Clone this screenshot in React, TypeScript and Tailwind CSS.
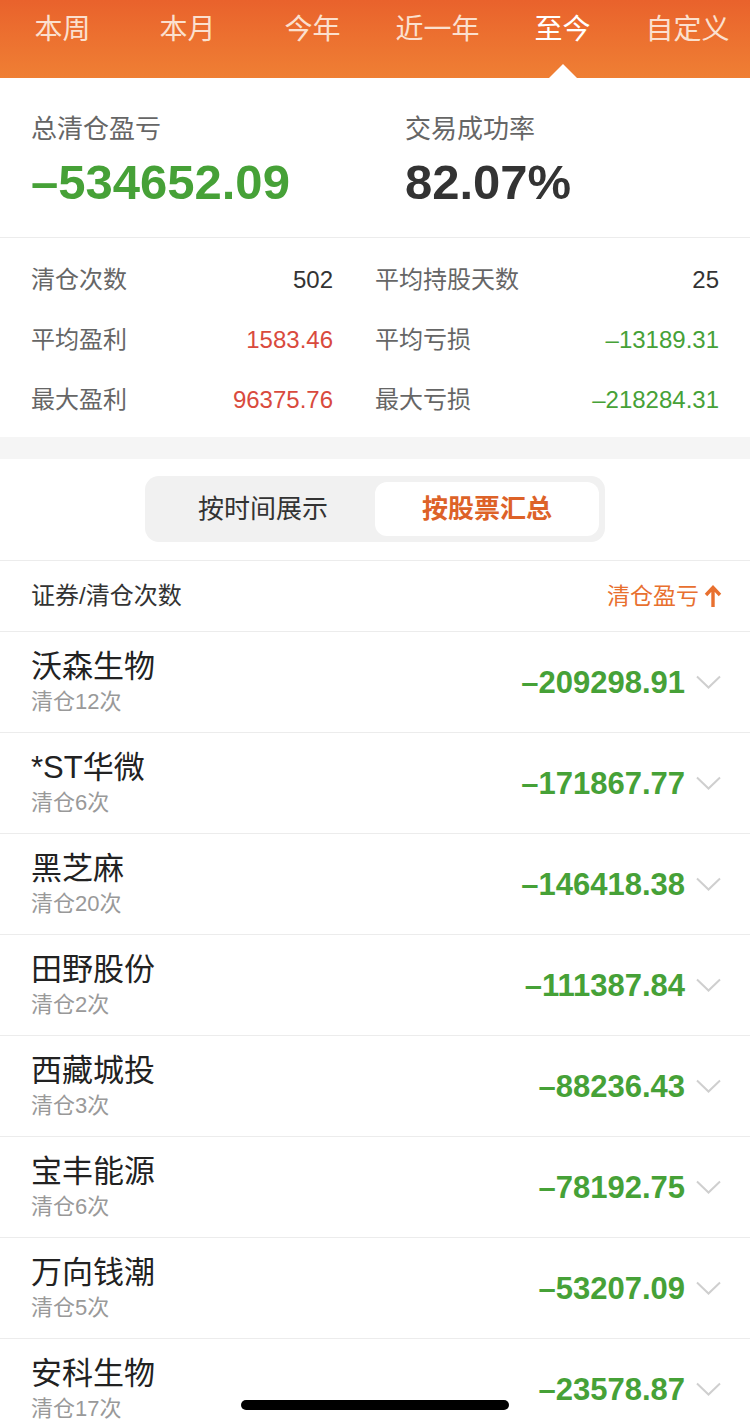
const tabs = ["本周", "本月", "今年", "近一年", "至今", "自定义"];

const stats = [
  { l: "清仓次数", v: "502", c: "text-[#333]", l2: "平均持股天数", v2: "25", c2: "text-[#333]" },
  { l: "平均盈利", v: "1583.46", c: "text-[#d94a3d]", l2: "平均亏损", v2: "–13189.31", c2: "text-[#46a137]" },
  { l: "最大盈利", v: "96375.76", c: "text-[#d94a3d]", l2: "最大亏损", v2: "–218284.31", c2: "text-[#46a137]" },
];

const rows = [
  { name: "沃森生物", n: 12, v: "–209298.91" },
  { name: "*ST华微", n: 6, v: "–171867.77" },
  { name: "黑芝麻", n: 20, v: "–146418.38" },
  { name: "田野股份", n: 2, v: "–111387.84" },
  { name: "西藏城投", n: 3, v: "–88236.43" },
  { name: "宝丰能源", n: 6, v: "–78192.75" },
  { name: "万向钱潮", n: 5, v: "–53207.09" },
  { name: "安科生物", n: 17, v: "–23578.87" },
];

export default function App() {
  return (
    <div className="relative w-[750px] h-[1427px] overflow-hidden bg-white font-['Liberation_Sans','Noto_Sans_CJK_SC',sans-serif]">
      {/* 顶部时间段 */}
      <div className="relative h-[78px] bg-gradient-to-b from-[#e9622c] to-[#ef7f34] grid grid-cols-6">
        {tabs.map((t, i) => (
          <div
            key={t}
            className={`flex justify-center pt-[10px] text-[28px] leading-[40px] ${
              i === 4 ? "text-white" : "text-[#fbe0cf]"
            }`}
          >
            {t}
          </div>
        ))}
        <div className="absolute left-[549px] bottom-0 w-0 h-0 border-l-[14px] border-r-[14px] border-b-[14px] border-l-transparent border-r-transparent border-b-white" />
      </div>

      {/* 汇总 */}
      <div className="flex h-[160px] border-b border-[#ececec]">
        <div className="w-[375px] pl-[31px] pt-[36px]">
          <div className="text-[26px] leading-[30px] text-[#666]">总清仓盈亏</div>
          <div className="mt-[10px] text-[49px] leading-[56px] font-bold text-[#46a137]">–534652.09</div>
        </div>
        <div className="pl-[30px] pt-[36px]">
          <div className="text-[26px] leading-[30px] text-[#666]">交易成功率</div>
          <div className="mt-[10px] text-[49px] leading-[56px] font-bold text-[#333]">82.07%</div>
        </div>
      </div>

      <div className="pt-[12px] pb-[7px]">
        {stats.map((s) => (
          <div key={s.l} className="flex h-[60px] items-center">
            <div className="w-[375px] pl-[31px] pr-[42px] flex justify-between text-[24px]">
              <span className="text-[#666]">{s.l}</span>
              <span className={s.c}>{s.v}</span>
            </div>
            <div className="flex-1 pr-[31px] flex justify-between text-[24px]">
              <span className="text-[#666]">{s.l2}</span>
              <span className={s.c2}>{s.v2}</span>
            </div>
          </div>
        ))}
      </div>

      <div className="h-[22px] bg-[#f5f5f5]" />

      {/* 切换 */}
      <div className="flex justify-center pt-[17px] pb-[18px] border-b border-[#ececec]">
        <div className="flex w-[460px] h-[66px] p-[6px] rounded-[14px] bg-[#f1f1f1]">
          <div className="flex-1 flex items-center justify-center text-[26px] text-[#333]">按时间展示</div>
          <div className="w-[224px] flex items-center justify-center rounded-[12px] bg-white text-[26px] font-bold text-[#dd6228]">
            按股票汇总
          </div>
        </div>
      </div>

      <div className="flex items-center justify-between h-[71px] pl-[31px] pr-[28px] border-b border-[#ececec]">
        <span className="text-[24px] text-[#333]">证券/清仓次数</span>
        <span className="flex items-center text-[23px] text-[#e8702f]">
          清仓盈亏
          <svg width="18" height="24" viewBox="0 0 18 24" className="ml-[5px]">
            <path d="M9 23V4M2 11l7-7.5 7 7.5" fill="none" stroke="#e8702f" strokeWidth="3.4" />
          </svg>
        </span>
      </div>

      {rows.map((r) => (
        <div key={r.name} className="flex items-center h-[101px] pl-[31px] pr-[29px] border-b border-[#ececec]">
          <div className="flex-1 pt-[2px]">
            <div className="text-[31px] leading-[36px] text-[#222]">{r.name}</div>
            <div className="mt-[2px] text-[22px] leading-[30px] text-[#999]">清仓{r.n}次</div>
          </div>
          <div className="mt-[2px] text-[31px] font-bold text-[#46a137]">{r.v}</div>
          <svg width="25" height="14" viewBox="0 0 25 14" className="ml-[11px]">
            <path d="M1 1.5l11.5 11 11.5-11" fill="none" stroke="#cfcfcf" strokeWidth="2" />
          </svg>
        </div>
      ))}

      <div className="absolute left-[241px] top-[1400px] w-[268px] h-[10px] rounded-full bg-black" />
    </div>
  );
}
